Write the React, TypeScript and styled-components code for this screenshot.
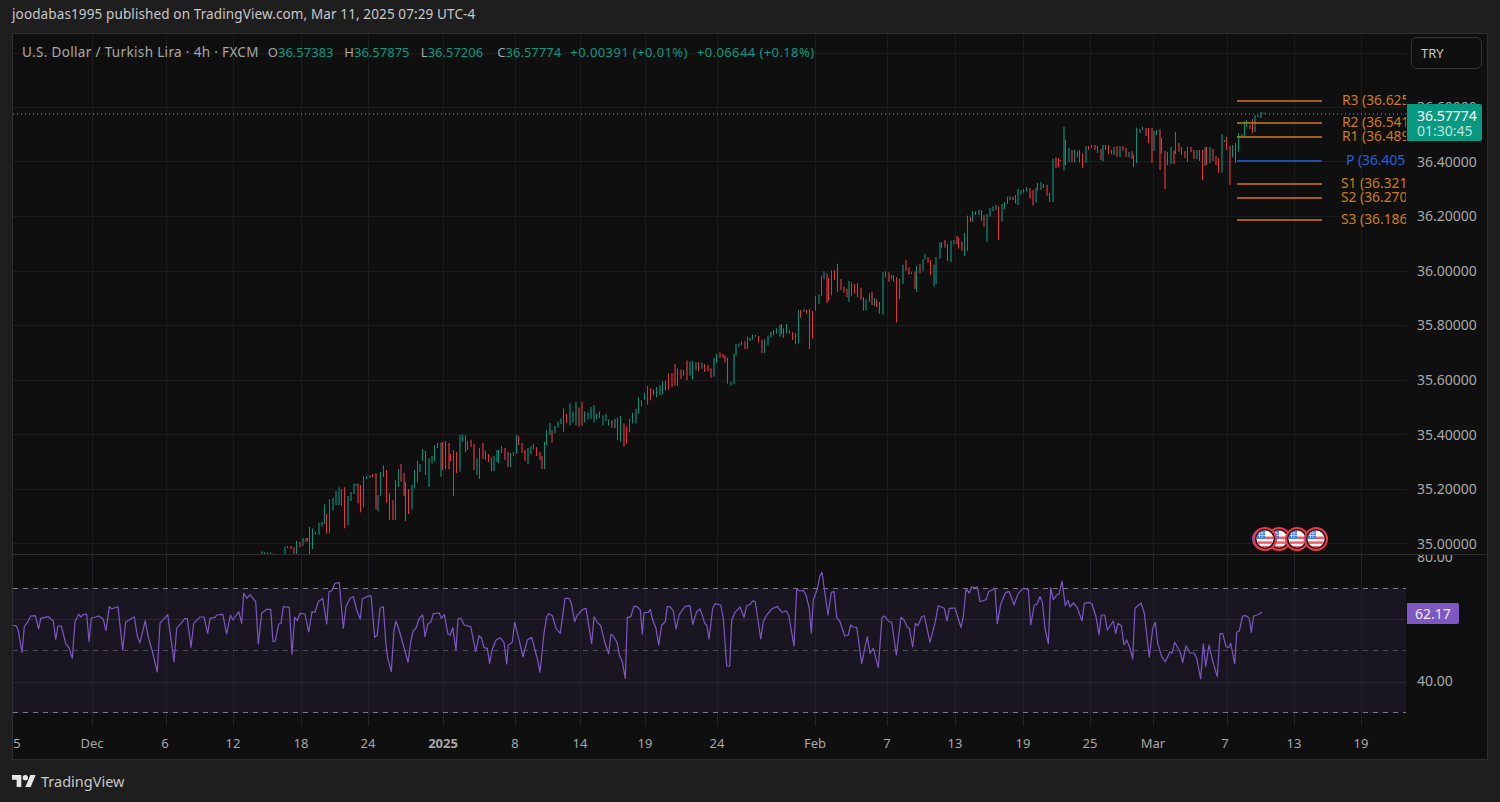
import { useMemo } from 'react';
import styled, { createGlobalStyle } from 'styled-components';

const UP = '#089981';
const DOWN = '#f23645';
const ORANGE = '#d07d12';
const BLUE = '#2460dc';
const PURPLE = '#7e57c2';

const VERTICAL_GRID = [92, 166, 233, 301, 368, 443, 515, 580, 645, 717, 815, 887, 955, 1023, 1090, 1153, 1227, 1294, 1361];
const HORIZONTAL_GRID = [53, 107, 161, 216, 271, 325, 380, 434, 489, 543];
const PRICE_TICKS = ['36.60000', '36.40000', '36.20000', '36.00000', '35.80000', '35.60000', '35.40000', '35.20000', '35.00000'];

const TIME_TICKS: { x: number; label: string; bold?: boolean }[] = [
    { x: 17, label: '5' },
    { x: 92, label: 'Dec' },
    { x: 165, label: '6' },
    { x: 233, label: '12' },
    { x: 301, label: '18' },
    { x: 368, label: '24' },
    { x: 443, label: '2025', bold: true },
    { x: 515, label: '8' },
    { x: 580, label: '14' },
    { x: 645, label: '19' },
    { x: 717, label: '24' },
    { x: 815, label: 'Feb' },
    { x: 887, label: '7' },
    { x: 955, label: '13' },
    { x: 1023, label: '19' },
    { x: 1090, label: '25' },
    { x: 1153, label: 'Mar' },
    { x: 1225, label: '7' },
    { x: 1294, label: '13' },
    { x: 1361, label: '19' },
];

const PIVOTS: { y: number; x: number; label: string; color: string }[] = [
    { y: 101, x: 1342, label: 'R3 (36.62580)', color: ORANGE },
    { y: 123, x: 1342, label: 'R2 (36.54190)', color: ORANGE },
    { y: 137, x: 1342, label: 'R1 (36.48960)', color: ORANGE },
    { y: 161, x: 1346, label: 'P (36.40570)', color: BLUE },
    { y: 184, x: 1341, label: 'S1 (36.32180)', color: ORANGE },
    { y: 198, x: 1341, label: 'S2 (36.27000)', color: ORANGE },
    { y: 220, x: 1341, label: 'S3 (36.18610)', color: ORANGE },
];

// candles traced at 3x from crops of the reference: "x:top-bottom" + U/D
const CANDLES_A = `33:394-404U 42:397-404U 51:397-404U 60:397-404U 69:400-404D 102:380-404U 111:378-384U 120:378-387D 129:381-404D
138:363-404U 146:366-381D 155:354-378U 164:354-366D 172:354-363D 178:321-404D 186:325-387U 195:336-344D 204:308-344U 212:306-320U
221:253-312U 229:282-341D 238:237-340U 247:234-272U 256:213-255U 264:202-255U 273:207-257U 282:202-325D 290:228-315U 299:216-243U
308:190-222U 316:192-198U 321:190-250D 330:195-277D 339:168-262U 348:168-177U 357:165-174U 365:162-171D 374:159-268D 382:225-274U
391:156-228U 399:136-171U 408:150-248D 417:219-300D 425:240-300D 434:180-300U 443:147-201U 451:132-185D 458:159-228D 466:187-303D
474:207-282D 483:195-268U 492:150-205U 500:122-187U 508:132-156U 517:87-122U 526:93-165D 534:115-201U 543:108-130U 552:75-123U
560:69-84D 569:68-170U 577:66-150D 586:63-148D 595:69-148D 601:102-123D 609:90-228U 618:96-159D 627:45-155U 635:43-64U 644:46-96D
652:63-90D 661:60-81D 670:72-150D 678:115-165U 687:84-177U 696:69-117D 705:93-120D 713:102-126D 722:112-153D 730:108-153U 739:90-126U
745:90-129U 753:78-99U 762:84-120D 771:96-141D 780:99-141U 788:96-108U 797:45-102U 805:48-75D 814:69-99D 822:90-122D 831:84-132U
840:78-102U 848:72-87U 857:81-108D 866:96-120D 874:108-147D 882:66-147U 888:30-75U 896:9-45U`;

const CANDLES_B = `4:548-566U 13:552-576D 22:555-574D 31:565-593D 40:534-590U 47:522-548U 56:517-533D 65:522-534D 73:526-548D 82:533-611D
91:605-617U 100:522-613U 105:492-527U 114:490-500U 123:484-496U 131:484-507D 140:470-507U 148:473-483U 157:464-479U 166:465-470D
174:468-487D 183:480-519D 191:478-519U 200:467-496U 209:456-472U 218:450-466U 227:445-461U 236:435-470U 243:432-462D 249:445-473D
258:432-461U 267:451-461D 275:456-480D 284:459-493D 293:390-490U 301:390-413D 310:387-396U 318:390-401D 327:387-507D 336:393-476D
344:349-392U 353:343-371U 362:288-348U 370:274-297U 379:280-369D 384:294-362D 393:271-346U 402:271-300D 410:251-335D 419:297-330D
428:320-338D 437:326-352D 445:303-366U 453:307-349U 462:312-341D 471:309-352U 480:323-360D 488:351-392D 496:358-392U 506:340-366U
514:335-375D 522:354-378U 528:358-381D 537:366-401D 546:277-404U 554:274-292U 563:277-305D 572:285-298U 580:285-305D 589:291-427D
597:297-357U 606:254-312U 615:240-272D 623:262-284D 632:277-282D 641:275-327D 649:257-335U 658:252-280D 667:237-274U 672:222-238U
681:231-248D 690:240-286D 698:254-320U 706:231-312U 716:187-236U 724:187-203D 733:180-203D 741:192-243D 750:182-246U 759:180-194U
767:168-192D 775:173-206D 784:185-212D 793:159-228U 801:107-212U 810:111-125D 816:93-125U 825:94-105D 833:90-105U 842:90-122D
850:105-140D 859:102-186U 868:84-110U 876:79-93U 885:75-90U 894:79-180D 902:72-124U 911:66-87U 920:50-72U 928:49-60U 937:50-60D
945:45-70D 951:27-75U 960:30-44U 969:27-38U 978:21-34U 986:24-56D 995:30-76D 1004:24-67U 1012:9-32U`;

const CANDLES_C = `0:246-270U 9:252-264D 18:255-287D 26:279-306D 35:177-306U 44:172-204D 53:174-201D 61:180-184D 70:80-212U 74:120-195D 84:144-187U
92:150-187D 101:150-187U 110:154-172D 118:150-187D 127:160-204D 135:138-189U 144:138-150D 153:135-144U 162:135-150D 170:138-159D
179:147-180D 187:135-184U 196:135-150D 205:135-163D 213:150-163U 219:141-165U 228:138-171D 237:138-171U 245:138-152D 254:144-171D
263:156-172U 272:153-177D 280:165-201D 288:83-189U 297:87-99U 306:80-90U 314:84-108D 323:84-129D 332:84-189D 340:93-153U 349:90-105U
357:87-210D 363:114-160D 372:153-267D 381:156-195D 389:141-192U 398:152-192D 406:96-162U 415:129-155D 424:141-165D 433:153-174D
441:140-186U 450:141-156D 459:150-177D 468:150-177U 476:150-183D 485:150-240D 493:141-198U 498:141-195D 507:141-189U 516:147-183D
524:168-195D 533:174-218D 542:102-218U 551:120-126U 559:111-150D 567:138-255D 576:135-172U 585:129-189D 593:99-156U 602:102-111U
611:63-111U 619:60-80U 628:75-87D 636:57-99D 642:45-96U 651:45-51U 659:36-54U 668:38-42U`;

// the stretch between the traced crops only needs the rough path
const TREND = [
    [551, 440], [556, 426], [568, 416], [598, 416], [612, 424], [626, 436], [640, 402], [660, 388], [680, 374], [702, 366],
];

// RSI line traced at 3x from crops: "x,y"
const RSI_A = `40,197 48,197 55,212 66,277 73,200 82,188 92,168 106,167 116,207 122,175 145,170 160,183 167,238 174,198 184,198 197,250
208,265 217,295 225,185 236,163 243,171 250,163 260,163 267,245 274,175 296,168 310,178 318,212 328,140 335,146 354,140 368,270 377,186
403,170 412,228 420,248 436,182 445,232 456,270 472,336 480,190 503,164 522,305 530,205 555,176 562,176 573,262 581,190 600,171 612,171
623,220 630,175 645,172 650,165 668,163 680,222 691,166 699,180 716,155 725,190 731,100 741,115 750,104 767,125 775,252 785,160 800,148
812,148 819,245 826,243 836,192 843,190 850,140 868,142 876,283 884,172 892,182 900,160 915,162 926,216 936,155 945,157 955,125 968,115
980,192 987,95 995,92 1005,70 1018,68 1030,205 1038,140`;

const RSI_B = `0,100 10,95 20,135 31,162 37,102 50,95 63,92 74,217 82,210 90,130 100,125 108,240 113,280 124,320 132,195 138,168 150,205 160,240
174,292 183,225 190,197 198,190 208,160 218,150 225,215 233,178 243,170 250,146 268,144 274,160 283,148 294,208 301,210 308,188 318,256
324,162 332,159 343,180 362,185 377,260 387,212 394,218 402,248 412,250 419,295 426,255 438,225 450,218 462,232 470,297 475,240 487,232
494,172 505,215 519,276 532,225 545,217 555,255 562,280 570,322 582,205 590,155 597,146 607,152 618,190 631,205 645,100 657,100 664,115
674,170 682,150 700,132 708,130 725,236 732,155 742,172 752,182 765,235 776,266 783,208 790,212 802,235 808,270 817,290 826,340 832,158
842,155 852,124 860,124 871,135 877,207 882,143 895,142 901,133 908,165 918,190 926,240 935,180 946,170 952,125 960,125 970,138 978,192
988,148 1005,124 1020,122 1028,178 1040,140`;

const RSI_C = `0,132 8,155 14,175 20,180 27,222 38,130 45,116 62,120 70,160 80,303 89,303 95,165 105,142 120,126 132,157 140,122 150,118 158,108
166,110 182,222 190,170 200,150 215,132 232,124 246,142 258,137 266,150 282,243 290,72 300,78 310,76 318,90 328,130 334,205 340,105 352,72
360,32 366,22 384,150 394,82 402,80 410,157 420,170 434,213 445,210 452,180 460,186 470,187 485,295 502,215 510,265 520,250 535,308 546,158
554,153 565,168 575,172 589,270 603,157 612,165 622,187 628,190 638,246 646,175 654,182 665,155 673,152 690,232 706,170 715,122 733,130
741,168 748,130 765,129 783,188 790,155 798,72 808,84 815,65 823,68 832,65 840,110 858,104 866,80 885,70 892,176 902,118 917,82 928,80
942,120 955,85 970,70 985,73 992,180 1003,120 1010,118 1020,95 1027,110 1035,190`;

const RSI_D = `25,237 32,68 40,104 50,90 58,86 66,48 76,122 84,106 90,126 100,114 112,128 126,168 133,115 148,112 156,118 168,155 177,210 184,150
194,150 202,195 220,168 227,205 234,175 244,182 252,240 260,225 270,250 278,282 285,130 303,114 313,145 328,277 338,190 346,172 353,235
365,275 376,290 390,260 396,265 404,232 420,260 428,292 438,242 450,264 462,264 470,280 482,342 490,236 497,305 507,240 520,295 532,335
540,206 548,206 558,245 566,248 572,235 584,297 590,202 598,198 608,153 618,152 628,160 634,202 641,153 652,150 666,142`;

type Candle = { x: number; top: number; bottom: number; up: boolean };

function seeded(seed: number) {
    let s = seed;
    return () => {
        s = (s * 16807) % 2147483647;
        return s / 2147483647;
    };
}

function interpolate(points: number[][], x: number) {
    for (let i = 1; i < points.length; i++) {
        if (x <= points[i][0]) {
            const [x0, y0] = points[i - 1];
            const [x1, y1] = points[i];
            return y0 + ((y1 - y0) * (x - x0)) / (x1 - x0);
        }
    }
    return points[points.length - 1][1];
}

function parseCandles(table: string, left: number, top: number): Candle[] {
    return table
        .trim()
        .split(/\s+/)
        .map((cell) => {
            const [, x, y0, y1, dir] = cell.match(/(\d+):(\d+)-(\d+)([UD])/)!;
            return { x: left + +x / 3, top: top + +y0 / 3, bottom: top + +y1 / 3, up: dir === 'U' };
        });
}

function buildCandles() {
    const rand = seeded(4021);
    const between: Candle[] = [];
    for (let x = 551; x < 700; x += 3) {
        const mid = interpolate(TREND, x) + (rand() - 0.5) * 6;
        const half = 3 + rand() * rand() * 15;
        between.push({ x, top: mid - half, bottom: mid + half * 0.8, up: rand() > 0.4 });
    }
    return [...parseCandles(CANDLES_A, 250, 420), ...between, ...parseCandles(CANDLES_B, 700, 180), ...parseCandles(CANDLES_C, 1040, 100)];
}

function parseLine(table: string, left: number, top: number) {
    return table
        .trim()
        .split(/\s+/)
        .map((cell) => {
            const [x, y] = cell.split(',').map(Number);
            return `${(left + x / 3).toFixed(1)},${(top + y / 3).toFixed(1)}`;
        })
        .join(' ');
}

function buildRsi() {
    return [parseLine(RSI_A, 0, 560), parseLine(RSI_B, 350, 565), parseLine(RSI_C, 700, 565), parseLine(RSI_D, 1040, 565)].join(' ');
}

function Flag({ x, y, id }: { x: number; y: number; id: string }) {
    return (
        <g transform={`translate(${x} ${y})`}>
            <circle r="11" fill="#141014" stroke={DOWN} strokeWidth="2" />
            <clipPath id={id}>
                <circle r="8.5" />
            </clipPath>
            <g clipPath={`url(#${id})`}>
                <rect x="-9" y="-9" width="18" height="18" fill="#f5f5f5" />
                <rect x="-9" y="-2.4" width="18" height="2.4" fill="#ef5a64" />
                <rect x="-9" y="2.4" width="18" height="2.4" fill="#ef5a64" />
                <rect x="-9" y="7" width="18" height="2.4" fill="#ef5a64" />
                <rect x="-9" y="-9" width="9" height="9" fill="#3f7fe0" />
                <path d="M-7-6h7M-7-3.5h7M-5.5-8v7M-3-8v7" stroke="#d6e4fb" strokeWidth=".7" />
            </g>
        </g>
    );
}

function Logo() {
    return (
        <LogoMark viewBox="0 4 36 18" aria-hidden="true">
            <path d="M14 22H7V11H0V4h14v18zM28 22h-8l7.5-18h8L28 22z" />
            <circle cx="20" cy="8" r="4" />
        </LogoMark>
    );
}

function Legend() {
    return (
        <LegendRow>
            <LegendTitle>U.S. Dollar / Turkish Lira · 4h · FXCM</LegendTitle>
            <LegendGroup>
                <span>O<Up>36.57383</Up></span>
                <span>H<Up>36.57875</Up></span>
                <span>L<Up>36.57206</Up></span>
                <span>C<Up>36.57774</Up></span>
            </LegendGroup>
            <Change>+0.00391 (+0.01%)</Change>
            <Change>+0.06644 (+0.18%)</Change>
        </LegendRow>
    );
}

function PricePlot() {
    const candles = useMemo(buildCandles, []);
    const rand = seeded(311);
    return (
        <Plot>
            <PlotSvg viewBox="13 34 1393 520">
                {HORIZONTAL_GRID.map((y) => (
                    <line key={y} x1="13" x2="1406" y1={y + 0.5} y2={y + 0.5} stroke="#1c1c1c" />
                ))}
                {VERTICAL_GRID.map((x) => (
                    <line key={x} x1={x + 0.5} x2={x + 0.5} y1="34" y2="554" stroke="#1c1c1c" />
                ))}
                <line x1="13" x2="1406" y1="114" y2="114" stroke={UP} strokeWidth="1.4" strokeDasharray="1 3" />
                {candles.map((c) => {
                    const dull = rand() < 0.55;
                    return (
                        <rect
                            key={c.x}
                            x={Math.round(c.x)}
                            y={c.top}
                            width={dull ? 2 : 1}
                            height={c.bottom - c.top}
                            fill={c.up ? UP : DOWN}
                            opacity={dull ? 0.55 : 0.95}
                        />
                    );
                })}
                {PIVOTS.map((p) => (
                    <line key={p.y} x1="1237" x2="1322" y1={p.y} y2={p.y} stroke={p.color} strokeWidth="1.6" />
                ))}
                <circle cx="1263" cy="539" r="11" fill={PURPLE} />
                <Flag x={1279} y={539} id="flag-b" />
                <Flag x={1297} y={539} id="flag-c" />
                <Flag x={1316} y={539} id="flag-d" />
                <Flag x={1265} y={539} id="flag-a" />
            </PlotSvg>
            <Legend />
            {PIVOTS.map((p) => (
                <PivotLabel key={p.label} $x={p.x} $y={p.y} $color={p.color}>
                    {p.label}
                </PivotLabel>
            ))}
        </Plot>
    );
}

function RsiPlot() {
    const line = useMemo(buildRsi, []);
    return (
        <Plot>
            <PlotSvg viewBox="13 555 1393 171">
                <rect x="13" y="588" width="1393" height="125" fill={PURPLE} opacity=".1" />
                {[619.5, 682.5].map((y) => (
                    <line key={y} x1="13" x2="1406" y1={y} y2={y} stroke="#2a2833" />
                ))}
                {VERTICAL_GRID.map((x) => (
                    <line key={x} x1={x + 0.5} x2={x + 0.5} y1="555" y2="726" stroke="#232228" />
                ))}
                <line x1="13" x2="1406" y1="588.5" y2="588.5" stroke="#787b86" strokeDasharray="5 5" />
                <line x1="13" x2="1406" y1="650.5" y2="650.5" stroke="#4c4b55" strokeDasharray="5 5" />
                <line x1="13" x2="1406" y1="712.5" y2="712.5" stroke="#787b86" strokeDasharray="5 5" />
                <polyline points={line} fill="none" stroke={PURPLE} strokeWidth="1.2" strokeLinejoin="round" />
            </PlotSvg>
        </Plot>
    );
}

export default function App() {
    return (
        <Page>
            <GlobalStyle />
            <Header>joodabas1995 published on TradingView.com, Mar 11, 2025 07:29 UTC-4</Header>
            <Frame>
                <PricePane>
                    <PricePlot />
                    <PriceAxis>
                        <CurrencyButton>TRY</CurrencyButton>
                        <PriceTicks>
                            {PRICE_TICKS.map((t) => (
                                <PriceTick key={t}>{t}</PriceTick>
                            ))}
                        </PriceTicks>
                        <PriceTag>
                            <strong>36.57774</strong>
                            <span>01:30:45</span>
                        </PriceTag>
                    </PriceAxis>
                </PricePane>
                <RsiPane>
                    <RsiPlot />
                    <PriceAxis>
                        <RsiTicks>
                            {['80.00', '60.00', '40.00'].map((t) => (
                                <RsiTick key={t}>{t}</RsiTick>
                            ))}
                        </RsiTicks>
                        <RsiTag>62.17</RsiTag>
                    </PriceAxis>
                </RsiPane>
                <TimeAxis>
                    {TIME_TICKS.map((t) => (
                        <TimeTick key={t.x} $x={t.x} $bold={t.bold}>
                            {t.label}
                        </TimeTick>
                    ))}
                </TimeAxis>
            </Frame>
            <Footer>
                <Logo />
                <Wordmark>TradingView</Wordmark>
            </Footer>
        </Page>
    );
}

const GlobalStyle = createGlobalStyle`
    html, body {
        margin: 0;
        padding: 0;
        background: #1e1e1e;
    }
`;

const Page = styled.div`
    width: 1500px;
    height: 802px;
    overflow: hidden;
    background: #1e1e1e;
    color: #b8b8b8;
    font-family: 'Noto Sans', 'Liberation Sans', sans-serif;
    font-size: 13px;
`;

const Header = styled.header`
    height: 33px;
    padding: 0 0 6px 12px;
    box-sizing: border-box;
    display: flex;
    align-items: center;
    font-size: 13.5px;
    letter-spacing: 0.12px;
    color: #c8c8c8;
`;

const Frame = styled.main`
    width: 1476px;
    height: 727px;
    margin-left: 12px;
    box-sizing: border-box;
    border: 1px solid #2e2e2e;
    background: #0f0f0f;
    display: flex;
    flex-direction: column;
`;

const PricePane = styled.section`
    height: 520px;
    display: flex;
    border-bottom: 1px solid #2e2e2e;
`;

const RsiPane = styled.section`
    height: 171px;
    display: flex;
`;

const Plot = styled.div`
    position: relative;
    width: 1393px;
    flex: none;
    overflow: hidden;
`;

const PlotSvg = styled.svg`
    display: block;
    width: 100%;
    height: 100%;
`;

const LegendRow = styled.div`
    position: absolute;
    top: 9px;
    left: 9px;
    display: flex;
    gap: 9px;
    white-space: nowrap;
    color: #a8a8a8;
`;

const LegendTitle = styled.span`
    font-size: 13.5px;
    letter-spacing: 0.34px;
`;

const LegendGroup = styled.div`
    display: grid;
    grid-template-columns: repeat(3, 76.5px) 64px;
`;

const Up = styled.span`
    color: ${UP};
`;

const Change = styled(Up)`
    letter-spacing: 0.4px;
`;

const PivotLabel = styled.span<{ $x: number; $y: number; $color: string }>`
    position: absolute;
    left: ${(p) => p.$x - 13}px;
    top: ${(p) => p.$y - 34 - 11}px;
    line-height: 20px;
    font-size: 13.8px;
    white-space: nowrap;
    color: ${(p) => p.$color};
`;

const PriceAxis = styled.div`
    position: relative;
    flex: 1;
    overflow: hidden;
    font-size: 14px;
`;

const CurrencyButton = styled.button`
    position: absolute;
    top: 3px;
    left: 5px;
    width: 71px;
    height: 32px;
    padding: 0 0 0 9px;
    box-sizing: border-box;
    text-align: left;
    border: 1px solid #363636;
    border-radius: 6px;
    background: #0f0f0f;
    color: #c8c8c8;
    font: inherit;
    font-size: 13px;
`;

const PriceTicks = styled.div`
    padding-top: 46px;
`;

const PriceTick = styled.div`
    height: 54.6px;
    line-height: 54.6px;
    padding-left: 11px;
    color: #a8a8a8;
`;

const PriceTag = styled.div`
    position: absolute;
    top: 70px;
    left: 1px;
    width: 75px;
    height: 37px;
    padding-left: 10px;
    box-sizing: border-box;
    border-radius: 0 2px 2px 0;
    background: ${UP};
    display: flex;
    flex-direction: column;
    justify-content: center;
    line-height: 15px;
    color: #ffffff;

    strong {
        font-weight: 400;
    }

    span {
        color: #bfe3dc;
    }
`;

const RsiTicks = styled.div`
    margin-top: -29px;
`;

const RsiTick = styled.div`
    height: 62.2px;
    line-height: 62.2px;
    padding-left: 11px;
    color: #a8a8a8;
`;

const RsiTag = styled.div`
    position: absolute;
    top: 48px;
    left: 1px;
    width: 52px;
    height: 21px;
    line-height: 21px;
    text-align: center;
    border-radius: 0 2px 2px 0;
    background: ${PURPLE};
    color: #f0ebf8;
`;

const TimeAxis = styled.div`
    position: relative;
    flex: 1;
`;

const TimeTick = styled.span<{ $x: number; $bold?: boolean }>`
    position: absolute;
    left: ${(p) => p.$x - 13}px;
    top: 8px;
    transform: translateX(-50%);
    color: #a8a8a8;
    font-weight: ${(p) => (p.$bold ? 700 : 400)};
`;

const Footer = styled.footer`
    height: 42px;
    padding-left: 12px;
    display: flex;
    align-items: center;
    gap: 5px;
`;

const LogoMark = styled.svg`
    width: 24px;
    height: 12px;
    fill: #e6e6e6;
`;

const Wordmark = styled.span`
    font-size: 14.5px;
    color: #c8c8c8;
`;
